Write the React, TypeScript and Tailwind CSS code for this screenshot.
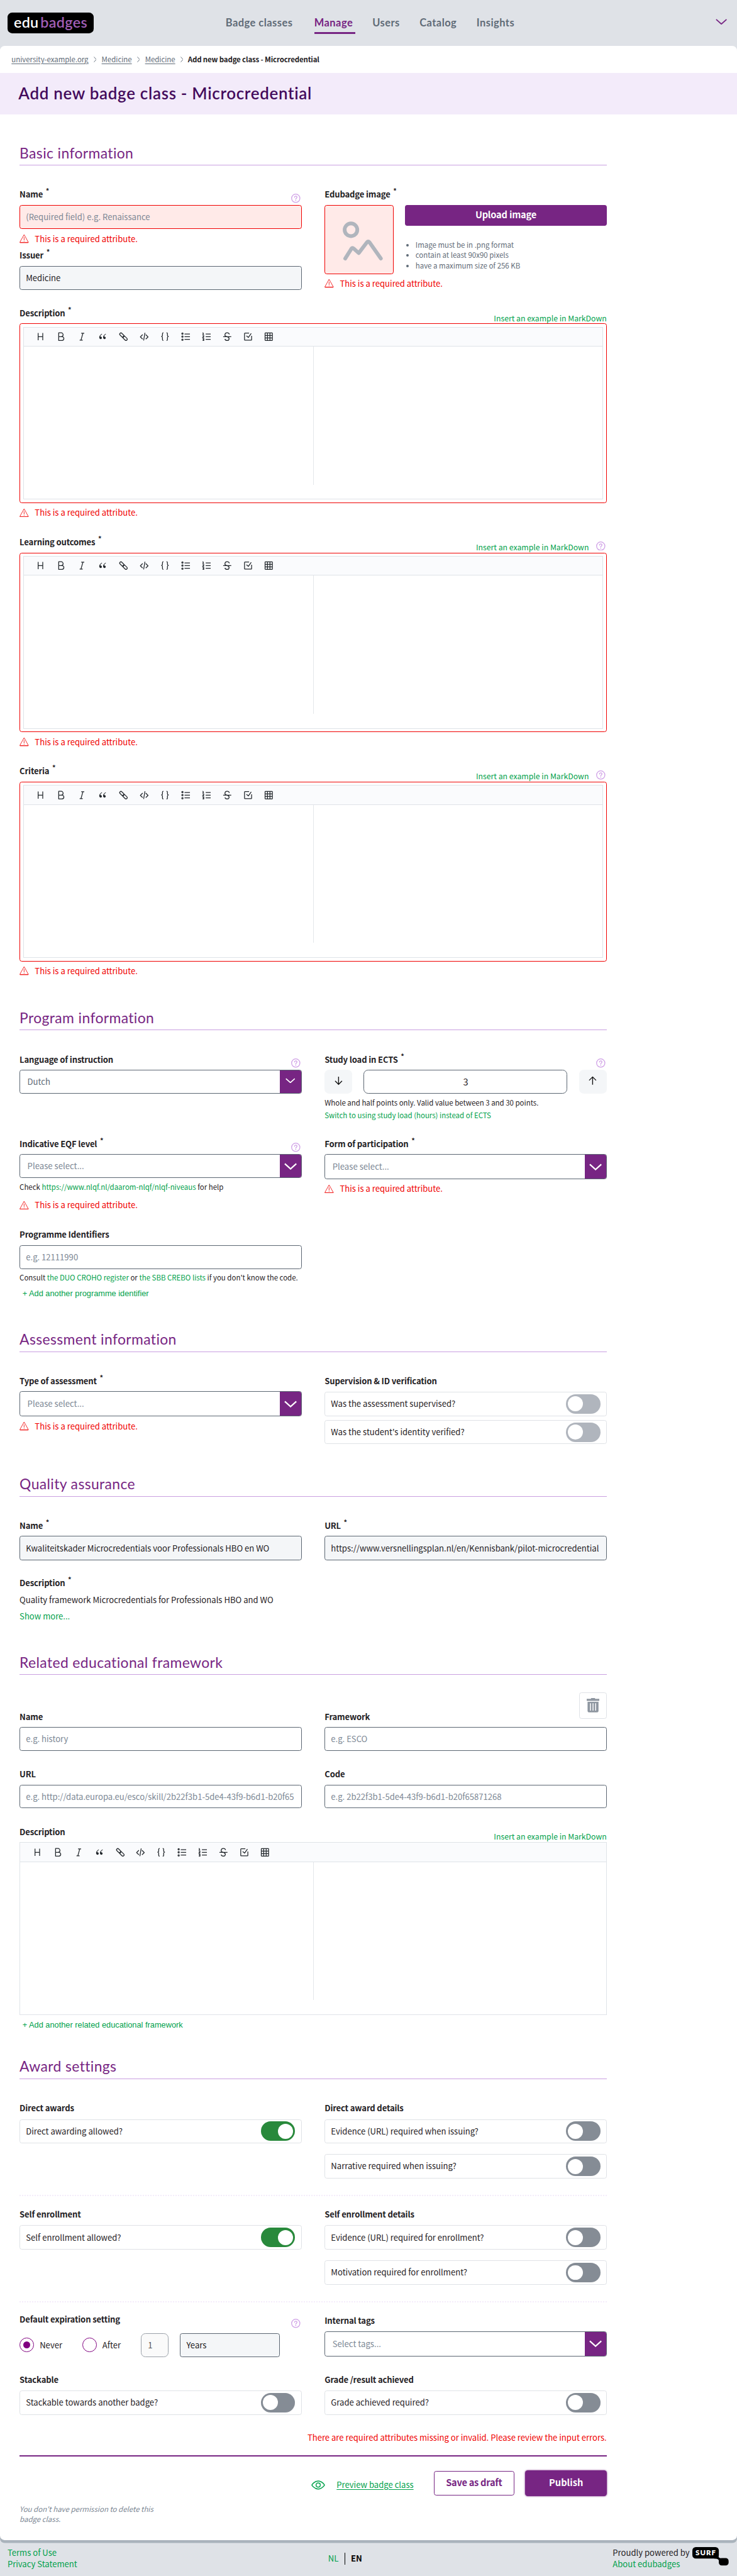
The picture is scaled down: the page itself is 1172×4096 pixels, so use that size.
import type { ReactNode } from "react";

const heading = "font-[Lato,sans-serif]";

function HelpIcon() {
  return (
    <svg viewBox="0 0 16 16" className="mt-[9.5px] mr-[2px] size-4 shrink-0 text-[#cf9fe6]" fill="none" stroke="currentColor" strokeWidth="1.4" strokeLinecap="round">
      <circle cx="8" cy="8" r="7.2" />
      <path d="M5.9 6.3C5.9 5 6.8 4.2 8 4.2s2.1.8 2.1 2c0 1.6-2.1 1.7-2.1 3.3" />
      <path d="M8 11.6v.2" strokeWidth="1.7" />
    </svg>
  );
}

function Label({ children, required, help, action, tall }: { children: ReactNode; required?: boolean; help?: boolean; action?: boolean; tall?: boolean }) {
  return (
    <div className={`flex items-start ${tall ? "h-[30px]" : "h-[29px]"}`}>
      <div className="flex-1 text-[14.3px] leading-[21px] font-semibold tracking-[-0.17px]">
        {children}
        {required && <span className="relative -top-[6.5px] ml-[5px] text-[12px]">*</span>}
      </div>
      {action && <div className={`mt-[9.5px] text-[13.4px] leading-5 text-[#00a14b] ${help ? "mr-[13px]" : ""}`}>Insert an example in MarkDown</div>}
      {help && <HelpIcon />}
    </div>
  );
}

function RequiredError({ className = "mt-[6.5px]" }: { className?: string }) {
  return (
    <div className={`flex h-5 items-center text-[14.3px] text-[#f00000] ${className}`}>
      <svg viewBox="0 0 16 16" className="mr-[10.5px] size-4" fill="none" stroke="currentColor" strokeWidth="0.9" strokeLinejoin="round">
        <path d="M8 1.2 15.5 14.6H.5Z" />
        <path d="M.8 15.2h14.4M8 5.5v5.4M8 12v1" />
      </svg>
      This is a required attribute.
    </div>
  );
}

function Input({ value, placeholder, h = "h-[42px]" }: { value?: string; placeholder?: string; h?: string }) {
  return (
    <div className={`flex items-center rounded-[4px] border border-[#5b6672] px-[10px] text-[14.3px] ${h} ${value ? "bg-[#f4f6f8]" : "text-[#7c8794]"}`}>
      <div className="leading-6 whitespace-nowrap">{value || placeholder}</div>
    </div>
  );
}

function Select({ text, h, small, dark }: { text: string; h: string; small?: boolean; dark?: boolean }) {
  return (
    <div className={`flex overflow-hidden rounded-[4px] border border-[#5b6672] ${h}`}>
      <div className={`flex flex-1 items-center pl-[12.5px] text-[14.4px] ${dark ? "text-[#5f6b77]" : "text-[#7c8794]"}`}>{text}</div>
      <div className="flex w-[37px] items-center justify-center bg-[#772583] text-white">
        <svg viewBox="0 0 22 12" className={small ? "mb-1 w-[17px]" : "w-[22px]"} fill="none" stroke="currentColor" strokeWidth="2.4">
          <path d="M1 1.5 11 10.5 21 1.5" />
        </svg>
      </div>
    </div>
  );
}

function Toggle({ text, on, disabled, className = "" }: { text: string; on?: boolean; disabled?: boolean; className?: string }) {
  return (
    <div className={`flex h-[42px] items-center justify-between rounded-[4px] border border-[#dfe2e6] px-[10px] text-[14.3px] ${className}`}>
      <span className="leading-5">{text}</span>
      <span className={`flex h-[34px] w-[60px] items-center rounded-full px-1 ${on ? "justify-end bg-[#28893b]" : disabled ? "bg-[#b0b5bd]" : "bg-[#858c95]"}`}>
        <span className="size-[26px] rounded-full bg-white" />
      </span>
    </div>
  );
}

const toolIcons: ReactNode[] = [
  <path d="M12 5v38M36 5v38M12 24h24" />,
  <path d="M24 24a10 10 0 0 0 0-20H11v20ZM28 44a10 10 0 0 0 0-20H11v20Z" />,
  <path d="M20 6h16M12 42h16M29 6 19 42" />,
  <g fill="currentColor" stroke="none">
    <path d="M18.9 9.1C11.3 14 7 19.6 6 25.7c-1.5 9.5 7.2 14.2 11.6 9.9s1.7-9.6-1.4-11.1c-3.2-1.5-5.2-1-4.8-3s5-7.6 9.1-10.2c.4-.3.3-1-.9-2.3-.4-.5-.4-.2-.7.1Z" />
    <path d="M38.9 9.1C31.3 14 27 19.6 26 25.7c-1.5 9.5 7.2 14.2 11.6 9.9s1.7-9.6-1.4-11.1c-3.2-1.5-5.2-1-4.8-3s5-7.6 9.1-10.2c.4-.3.3-1-.9-2.3-.4-.5-.4-.2-.7.1Z" />
  </g>,
  <g transform="rotate(45 24 24)">
    <rect x="-1" y="17.5" width="27" height="13" rx="6.5" />
    <rect x="22" y="17.5" width="27" height="13" rx="6.5" />
  </g>,
  <path d="M16 13 4 25.4 16 37M32 13l12 12.4L32 37M28 4l-7 40" />,
  <path d="M16 4c-2 0-5 1-5 5v9c0 3-5 5-5 5s5 2 5 5v11c0 4 3 5 5 5M32 4c2 0 5 1 5 5v9c0 3 5 5 5 5s-5 2-5 5v11c0 4-3 5-5 5" />,
  <g>
    <circle cx="7" cy="8" r="3.5" />
    <circle cx="7" cy="24" r="3.5" />
    <circle cx="7" cy="40" r="3.5" />
    <path d="M18 10h28M18 24h28M18 38h28" />
  </g>,
  <path d="M7 3v10M3 13h8M4 5l3-2M4 19h6v4l-6 5h7M4 34h6v10H4M5 39h5M20 10h26M20 24h26M20 38h26" />,
  <path d="M3 24h42M24 24c16 6 10 20 0 20-10 0-12-8-12-8M35.2 12S33 4 24 4s-12 6-12 12c0 3 3 6 12 8" />,
  <path d="M43 20v20a2.5 2.5 0 0 1-2.5 2.5h-32A2.5 2.5 0 0 1 6 40V8a2.5 2.5 0 0 1 2.5-2.5H30M16 20l10 8L41 7" />,
  <path d="M7 4.5h34a2 2 0 0 1 2 2v35a2 2 0 0 1-2 2H7a2 2 0 0 1-2-2v-35a2 2 0 0 1 2-2ZM5 17.5h38M5 30.5h38M17.5 4.5v39M30.5 4.5v39" />,
];

function Editor() {
  return (
    <div className="flex h-[300px] flex-col border border-[#dfe3e8]">
      <div className="flex h-[33px] shrink-0 items-center gap-5 border-b border-[#dfe3e8] bg-[#fafbfd] pl-[21.5px] text-[#24292e]">
        {toolIcons.map((icon, i) => (
          <svg key={i} viewBox="0 0 48 48" className="size-4" fill="none" stroke="currentColor" strokeWidth="4.2" strokeLinejoin="round">
            {icon}
          </svg>
        ))}
      </div>
      <div className="h-[240px] w-[calc(50%+1px)] border-r border-[#e3e6ea]" />
    </div>
  );
}

function MarkdownField({ label, help }: { label: string; help?: boolean }) {
  return (
    <div className="h-[398px]">
      <Label required action help={help}>{label}</Label>
      <div className="rounded-[4px] border border-[#f00000] p-[5px]">
        <Editor />
      </div>
      <RequiredError />
    </div>
  );
}

function Section({ title, h, children }: { title: string; h: string; children: ReactNode }) {
  return (
    <section className={h}>
      <h2 className={`mb-[39.5px] h-10 border-b border-[#c99fe0] text-[25px] leading-[35px] tracking-[0.42px] text-[#772583] ${heading}`}>{title}</h2>
      {children}
    </section>
  );
}

function Row({ h = "", children }: { h?: string; children: ReactNode }) {
  return <div className={`grid grid-cols-[490px_490px] gap-x-10 ${h}`}>{children}</div>;
}

function Arrow({ up }: { up?: boolean }) {
  return (
    <div className="flex w-12 items-center justify-center rounded-lg bg-[#f4f6f8] pb-1">
      <svg viewBox="0 0 14 16" className={`w-[14px] ${up ? "rotate-180" : ""}`} fill="none" stroke="#111" strokeWidth="1.5">
        <path d="M7 1v13M1 8.5l6 6 6-6" />
      </svg>
    </div>
  );
}

const green = "text-[#00a14b]";

export default function App() {
  return (
    <div className="h-[4475px] w-[1280.5px] overflow-hidden bg-[#dfe2e7] font-['Noto_Sans_CJK_SC',sans-serif] text-[#1f2124] [zoom:0.9153]">
      <header className="flex h-20 items-center pl-[13px]">
        <div className={`flex h-9 w-[150px] items-center justify-center rounded-[8px] bg-black pb-[2px] text-[25.5px] font-semibold ${heading}`}>
          <span className="mr-[3px] tracking-[0.3px] text-white">edu</span>
          <span className="tracking-[0.4px] text-[#a05eb5]">badges</span>
        </div>
        <nav className={`ml-[229px] flex flex-1 gap-[30px] pt-[8px] text-[18px] leading-6 font-bold tracking-[0.5px] text-[#5f6b77] ${heading}`}>
          <span className="w-[124px]">Badge classes</span>
          <span className="w-[71px] border-b-[3.3px] border-[#772583] pb-[3px] text-[#772583]">Manage</span>
          <span className="w-[52px]">Users</span>
          <span className="w-[69px]">Catalog</span>
          <span>Insights</span>
        </nav>
        <svg viewBox="0 0 20 10" className="mr-[17px] mb-1 w-5" fill="none" stroke="#772583" strokeWidth="2">
          <path d="M1 1 10 9 19 1" />
        </svg>
      </header>

      <main className="h-[4333px] rounded-[8px] bg-white shadow-[0_5px_0_#aab3bc]">
        <div className="flex h-[47px] items-center gap-[9px] pl-5 text-[12.53px] tracking-[-0.03px] text-[#5f6b77]">
          {["university-example.org", "Medicine", "Medicine"].map((t, i) => (
            <span key={i} className="flex items-center gap-[9px]">
              <span className="underline underline-offset-2">{t}</span>
              <svg viewBox="0 0 5 10" className="w-[5px]" fill="none" stroke="currentColor" strokeWidth="1">
                <path d="M.5.5 4.5 5 .5 9.5" />
              </svg>
            </span>
          ))}
          <span className="-ml-px font-semibold tracking-[-0.16px] text-[#1f2124]">Add new badge class - Microcredential</span>
        </div>
        <h1 className={`flex h-[72px] items-center bg-[#f3ebfa] pb-[2px] pl-8 text-[28.3px] font-semibold tracking-[0.78px] text-[#430a5c] ${heading}`}>
          Add new badge class - Microcredential
        </h1>

        <div className="w-[1054px] pt-[48.5px] pl-[34px]">
          <Section title="Basic information" h="h-[1502.5px]">
            <Row h="h-[206px]">
              <div>
                <Label required help>Name</Label>
                <div className="flex h-[42px] items-center rounded-[4px] border border-[#f00000] bg-[#ffeae8] px-[10px] text-[14.3px] text-[#7c8794]">
                  (Required field) e.g. Renaissance
                </div>
                <RequiredError />
                <div className="h-[8.5px]" />
                <Label required>Issuer</Label>
                <Input value="Medicine" />
              </div>
              <div>
                <Label required>Edubadge image</Label>
                <div className="flex gap-5">
                  <div className="size-[120px] rounded-[4px] border border-[#f00000] bg-[#ffeae8]">
                    <svg viewBox="0 0 118 118" fill="none" stroke="#b0b5bd" strokeWidth="6.5" strokeLinecap="round" strokeLinejoin="round">
                      <circle cx="45" cy="42" r="11" />
                      <path d="M35 92 46 74.5Q47.5 72.5 49.5 74.5L58.5 82.5 73 63.5Q75 61 77 63.5L97 92" />
                    </svg>
                  </div>
                  <div className="flex-1">
                    <div className="flex h-9 items-center justify-center rounded-[4px] bg-[#772583] pb-[2px] text-[16px] font-bold tracking-[-0.2px] text-white">Upload image</div>
                    <ul className="mt-6 list-disc pl-[18px] text-[12.53px] leading-[18px] text-[#5f6b77]">
                      <li>Image must be in .png format</li>
                      <li>contain at least 90x90 pixels</li>
                      <li>have a maximum size of 256 KB</li>
                    </ul>
                  </div>
                </div>
                <RequiredError />
              </div>
            </Row>
            <MarkdownField label="Description" />
            <MarkdownField label="Learning outcomes" help />
            <MarkdownField label="Criteria" help />
          </Section>

          <Section title="Program information" h="h-[558.5px]">
            <Row h="h-[146.5px]">
              <div>
                <Label help>Language of instruction</Label>
                <Select text="Dutch" h="h-[41.5px]" small dark />
              </div>
              <div>
                <Label required help>Study load in ECTS</Label>
                <div className="flex h-[41.5px] gap-5">
                  <Arrow />
                  <div className="flex flex-1 items-center justify-center rounded-lg border border-[#5b6672] text-[16px]">3</div>
                  <Arrow up />
                </div>
                <div className="mt-[5px] text-[12.53px] leading-5">Whole and half points only. Valid value between 3 and 30 points.</div>
                <div className={`mt-[2.6px] text-[12.53px] leading-5 ${green}`}>Switch to using study load (hours) instead of ECTS</div>
              </div>
            </Row>
            <Row h="h-[158px]">
              <div>
                <Label required help>Indicative EQF level</Label>
                <Select text="Please select..." h="h-[41.5px]" />
                <div className="mt-[5px] text-[12.53px] leading-5">
                  Check <span className={green}>https://www.nlqf.nl/daarom-nlqf/nlqf-niveaus</span> for help
                </div>
                <RequiredError className="mt-3" />
              </div>
              <div>
                <Label required>Form of participation</Label>
                <Select text="Please select..." h="h-[43.5px]" />
                <RequiredError />
              </div>
            </Row>
            <Row>
              <div>
                <Label>Programme Identifiers</Label>
                <Input placeholder="e.g. 12111990" h="h-[41.5px]" />
                <div className="mt-[5px] text-[12.53px] leading-5 whitespace-nowrap">
                  Consult <span className={green}>the DUO CROHO register</span> or <span className={green}>the SBB CREBO lists</span> if you don't know the code.
                </div>
                <div className={`mt-2 pl-[5px] font-['Liberation_Sans',sans-serif] text-[14px] leading-5 ${green}`}>+ Add another programme identifier</div>
              </div>
            </Row>
          </Section>

          <Section title="Assessment information" h="h-[251.5px]">
            <Row>
              <div>
                <Label required>Type of assessment</Label>
                <Select text="Please select..." h="h-11" />
                <RequiredError />
              </div>
              <div>
                <Label tall>Supervision &amp; ID verification</Label>
                <Toggle text="Was the assessment supervised?" disabled />
                <Toggle text="Was the student's identity verified?" disabled className="mt-[7px]" />
              </div>
            </Row>
          </Section>

          <Section title="Quality assurance" h="h-[310px]">
            <Row h="h-[100px]">
              <div>
                <Label required>Name</Label>
                <Input value="Kwaliteitskader Microcredentials voor Professionals HBO en WO" />
              </div>
              <div>
                <Label required>URL</Label>
                <Input value="https://www.versnellingsplan.nl/en/Kennisbank/pilot-microcredential" />
              </div>
            </Row>
            <Label required>Description</Label>
            <div className="mt-px text-[14.3px] leading-5">Quality framework Microcredentials for Professionals HBO and WO</div>
            <div className={`mt-[9px] text-[14.3px] leading-5 ${green}`}>Show more...</div>
          </Section>

          <Section title="Related educational framework" h="h-[702px]">
            <div className="-mt-[9px] mb-[-15px] ml-auto flex h-[46px] w-12 items-center justify-center rounded-[4px] border border-[#dfe2e6] pb-[2px]">
              <svg viewBox="0 0 22 25" className="w-[22px]" fill="#8e96a0">
                <path d="M7.5 0h7v1.5H22V5H0V1.5h7.5Z" />
                <path d="M1.5 6.500h19V22.5a2.500 2.500 0 0 1-2.500 2.500H4a2.500 2.500 0 0 1-2.500-2.500Z" />
                <path d="M6.500 9v13M11 9v13M15.500 9v13" stroke="#fff" strokeWidth="1.600" />
              </svg>
            </div>
            <Row h="h-[100px]">
              <div>
                <Label>Name</Label>
                <Input placeholder="e.g. history" h="h-[41px]" />
              </div>
              <div>
                <Label>Framework</Label>
                <Input placeholder="e.g. ESCO" h="h-[41px]" />
              </div>
            </Row>
            <Row h="h-[100px]">
              <div>
                <Label>URL</Label>
                <Input placeholder="e.g. http://data.europa.eu/esco/skill/2b22f3b1-5de4-43f9-b6d1-b20f65" h="h-[41px]" />
              </div>
              <div>
                <Label>Code</Label>
                <Input placeholder="e.g. 2b22f3b1-5de4-43f9-b6d1-b20f65871268" h="h-[41px]" />
              </div>
            </Row>
            <Label action>Description</Label>
            <Editor />
            <div className={`mt-2 pl-[5px] font-['Liberation_Sans',sans-serif] text-[14px] leading-5 ${green}`}>+ Add another related educational framework</div>
          </Section>

          <Section title="Award settings" h="h-[652px]">
            <Row h="mb-[21px] h-[163.5px] border-b-[2.2px] border-dotted border-[#f3ebfa]">
              <div>
                <Label tall>Direct awards</Label>
                <Toggle text="Direct awarding allowed?" on />
              </div>
              <div>
                <Label tall>Direct award details</Label>
                <Toggle text="Evidence (URL) required when issuing?" />
                <Toggle text="Narrative required when issuing?" className="mt-[19px]" />
              </div>
            </Row>
            <Row h="mb-[19px] h-[164px] border-b-[2.2px] border-dotted border-[#f3ebfa]">
              <div>
                <Label tall>Self enrollment</Label>
                <Toggle text="Self enrollment allowed?" on />
              </div>
              <div>
                <Label tall>Self enrollment details</Label>
                <Toggle text="Evidence (URL) required for enrollment?" />
                <Toggle text="Motivation required for enrollment?" className="mt-[19px]" />
              </div>
            </Row>
            <Row h="h-[104px]">
              <div>
                <Label help>Default expiration setting</Label>
                <div className="mt-[5px] flex h-[42px] items-center text-[14.3px]">
                  <span className="mr-[10px] flex size-[25px] items-center justify-center rounded-full border border-[#800080]">
                    <span className="size-3 rounded-full bg-[#800080]" />
                  </span>
                  <span className="w-[74px]">Never</span>
                  <span className="mr-[10px] size-[25px] rounded-full border border-[#800080]" />
                  <span className="w-[67px]">After</span>
                  <span className="mr-5 flex h-[42px] w-12 items-center rounded-lg border border-[#9aa1a9] bg-[#fafafa] pl-[11px] text-[#555]">1</span>
                  <span className="flex h-[42px] w-[173px] items-center rounded-[4px] border border-[#5b6672] bg-[#f4f6f8] pl-[10px]">Years</span>
                </div>
              </div>
              <div className="pt-[2px]">
                <Label>Internal tags</Label>
                <Select text="Select tags..." h="h-11" />
              </div>
            </Row>
            <Row>
              <div>
                <Label tall>Stackable</Label>
                <Toggle text="Stackable towards another badge?" />
              </div>
              <div>
                <Label tall>Grade /result achieved</Label>
                <Toggle text="Grade achieved required?" />
              </div>
            </Row>
          </Section>

          <div className="h-[44px] border-b-[2.2px] border-[#772583] text-right text-[14.3px] leading-[21px] text-[#f00000]">
            There are required attributes missing or invalid. Please review the input errors.
          </div>
          <div className="mt-[25px] flex h-[42px] items-center justify-end">
            <svg viewBox="0 0 24 16" className="mt-[6px] w-6" fill="none" stroke="#00a14b" strokeWidth="1.6">
              <path d="M1 8s4-7 11-7 11 7 11 7-4 7-11 7S1 8 1 8Z" />
              <circle cx="12" cy="8" r="3.7" />
            </svg>
            <span className={`mt-[5px] mr-[35px] ml-[20px] text-[14.3px] underline underline-offset-2 ${green}`}>Preview badge class</span>
            <span className="mr-[19px] flex h-[42px] w-[140px] items-center justify-center rounded-[4px] border border-[#772583] pb-[3px] text-[16px] font-semibold tracking-[-0.3px] text-[#772583]">Save as draft</span>
            <span className="-mr-[0.5px] flex h-11 w-[142px] items-center justify-center rounded-[5px] bg-[#772583] pb-[3px] text-[16px] font-bold text-white shadow-[0_0_3px_#772583]">Publish</span>
          </div>
          <p className="mt-[14px] w-[250px] text-[12.53px] leading-[18px] text-[#7c8794] italic">You don't have permission to delete this badge class.</p>
        </div>
      </main>

      <footer className="flex h-[62px] items-center justify-between pt-[2px] text-[14.3px] leading-5">
        <div className={`w-[557px] pl-[13px] ${green}`}>
          <div>Terms of Use</div>
          <div>Privacy Statement</div>
        </div>
        <div className="flex flex-1 items-center pl-[13px]">
          <span className={`w-[28.5px] ${green}`}>NL</span>
          <span className="h-5 border-l border-black pl-[10px] font-semibold text-black">EN</span>
        </div>
        <div className="w-[216px]">
          <div className="flex h-5 items-center">
            Proudly powered by
            <svg viewBox="0 0 64 34" className="mt-[14px] ml-[5px] w-16" fill="#000">
              <rect x="0" y="0" width="46" height="20" rx="6" />
              <rect x="46" y="19" width="17" height="13" rx="5" />
              <path d="M44 12 46 18 50 20 46 24Q46 20 38 20Z" />
              <text x="5.5" y="14.5" fill="#fff" fontSize="12.5" fontWeight="800" fontFamily="Lato, sans-serif" textLength="35">SURF</text>
            </svg>
          </div>
          <div className={green}>About edubadges</div>
        </div>
      </footer>
    </div>
  );
}
